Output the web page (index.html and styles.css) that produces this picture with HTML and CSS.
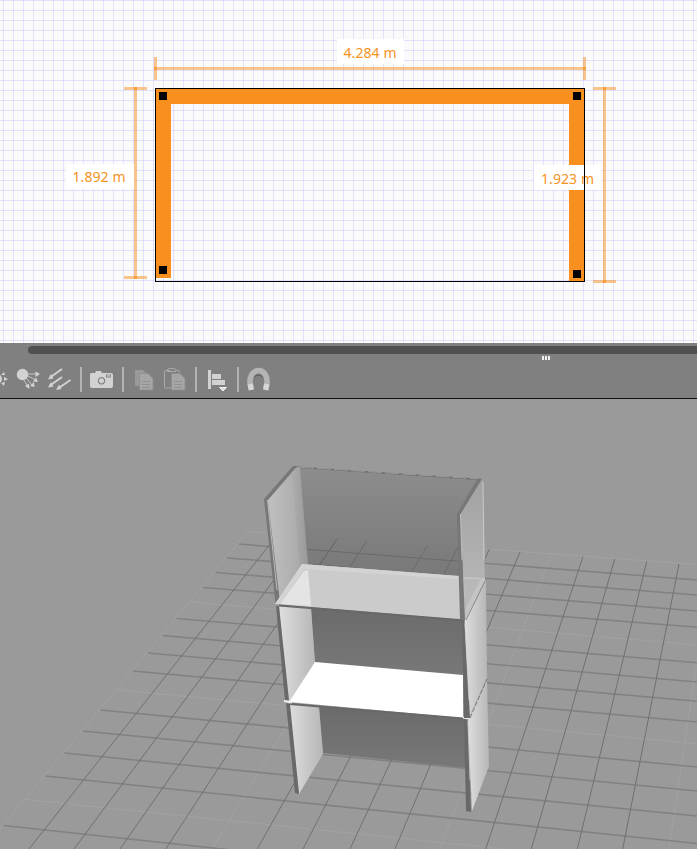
FILE: index.html
```
<!DOCTYPE html>
<html lang="en">
<head>
<meta charset="utf-8">
<title>Home planner</title>
<link rel="stylesheet" href="styles.css">
</head>
<body>
<main class="app">
  <section class="plan">
    <svg class="canvas" viewBox="0 0 697 343">
      <path class="wall" d="M155 88H585V281H569V104H171V278H155Z"/>
      <g class="dimension">
        <path d="M154 57h3v23h-3zM583 57h3v23h-3zM157 67h426v3h-426z"/>
        <path d="M124 87h23v3h-23zM124 276h23v3h-23zM134 90h3v186h-3z"/>
        <path d="M593 87h23v3h-23zM593 280h23v3h-23zM603 90h3v190h-3z"/>
      </g>
      <path class="overlap" d="M154 67h3v3h-3zM583 67h3v3h-3zM134 87h3v3h-3zM134 276h3v3h-3zM603 87h3v3h-3zM603 280h3v3h-3z"/>
      <g class="label-box">
        <rect x="337" y="39" width="67" height="25"/>
        <rect x="66" y="164" width="68" height="25"/>
        <rect x="534" y="165" width="67" height="25"/>
      </g>
      <g class="label">
        <text x="343.500" y="58" textLength="53">4.284 m</text>
        <text x="72.500" y="182" textLength="53">1.892 m</text>
        <text x="541" y="184" textLength="53">1.923 m</text>
      </g>
      <rect class="outline" x="155.500" y="88.500" width="429" height="193"/>
      <path class="handle" d="M159 92h8v8h-8zM573 92h8v8h-8zM159 266h8v8h-8zM573 270h8v8h-8z"/>
    </svg>
  </section>
  <div class="scroll"><div class="thumb"></div></div>
  <nav class="toolbar">
    <svg class="canvas" viewBox="0 357 697 41">
      <path class="grip" d="M542 356h2v4h-2zM545 356h2v4h-2zM548 356h2v4h-2z"/>
      <g class="icon">
        <circle cx="-3" cy="379" r="5"/>
        <path d="M1 375l3-3 1 3zM4 377l4 2-4 2zM1 383l4-1-1 4z"/>
        <circle cx="22.500" cy="374.500" r="5.700"/>
        <path class="ray" d="M28 374h9M28 376l8 4M26 378l6 7M24 380l4 7"/>
        <path d="M35.500 371.500l4.500 2.500-4.500 3zM33 381.500l3-4 2 4.500zM30 386l4-4 .5 5zM25 386l4-2.500.5 5.500z"/>
        <path class="arrow" d="M62 369L50 377.500M62 377L50 385.500M70.500 380L58 388.500"/>
        <path d="M48 379.500l3-5.500 2.500 4.500zM48 387.500l3-5.500 2.500 4.500zM56 390l3-5.500 2.500 4.500z"/>
        <path fill-rule="evenodd" d="M91 373h4l1-2h5l1 2h9q2 0 2 2v11q0 2-2 2H92q-2 0-2-2V375q0-2 1-2zM106 374.500v3h5v-3zM107 375.300h3.300v1.300h-3.300zM101.500 377a3.800 3.800 0 1 0 .01 0zM101.500 378.200a2.600 2.600 0 1 1-.01 0z"/>
      </g>
      <path class="divider" d="M81 367v25M123 367v25M196 367v25M238 367v25"/>
      <g class="icon muted">
        <path d="M135 370h8l5 5v11h-13z"/>
        <path class="sheet" d="M139.500 373.500h8.500l5 5v11.500h-13.500z"/>
        <path class="clip" d="M170 370.500h-4q-1.500 0-1.500 1.500v14.500q0 1.500 1.500 1.500h5M176 370.500h2.500q1 0 1 2M167.500 369.500q0-1 2-1h4q2 0 2 1v2h-8z"/>
        <path class="sheet" d="M171.500 373.500h8.500l5 5v11.500h-13.500z"/>
      </g>
      <path class="paper" d="M142 381.500h8M142 384.500h8M142 387.500h8M174 381.500h8M174 384.500h8M174 387.500h8"/>
      <path class="icon" d="M208 370h3v19h-3zM212 374h9v5h-9zM212 380h13v5h-13z"/>
      <path class="menu" d="M219.500 387.500h7l-3.500 3.500z"/>
      <path class="magnet" d="M250.300 385.500c-3.500-20 20-20 16.400 0"/>
      <path class="magnet tip" d="M250.300 384l1 6M266.700 384l-1 6"/>
      <path class="inner" d="M254.500 377q4-4 8 0"/>
    </svg>
  </nav>
  <section class="scene">
    <svg class="canvas" viewBox="0 399 697 450">
      <defs>
        <linearGradient id="back" x2="0" y2="1"><stop stop-color="#8d8d8d"/><stop offset="1" stop-color="#787878"/></linearGradient>
        <linearGradient id="lower" x2="0" y2="1"><stop stop-color="#6b6b6b"/><stop offset="1" stop-color="#787878"/></linearGradient>
        <linearGradient id="left"><stop stop-color="#c0c0c0"/><stop offset=".65" stop-color="#adadad"/><stop offset="1" stop-color="#999"/></linearGradient>
        <linearGradient id="side"><stop stop-color="#dedede"/><stop offset="1" stop-color="#b6b6b6"/></linearGradient>
        <linearGradient id="right" x2="0" y2="1"><stop stop-color="#a2a2a2"/><stop offset="1" stop-color="#bcbcbc"/></linearGradient>
      </defs>
      <g class="grid light">
        <path d="M248 531.500L697 564.500M190 602L697 645M117 690L697 743.700M25 799.500L697 869M248 531.500L0 829"/>
        <path d="M397.700 543L212 849M551.300 554L440 849M711 566L669 849"/>
      </g>
      <g class="grid rows">
        <path d="M238.500 544L697 580M227 558L697 595M215.500 572.500L697 611M203 587.500L697 627.300M176.500 618.500L697 662.700M162.500 635.500L697 682M148 653L697 701.300M133 671L697 722M100.500 710L697 767M83 731L697 791M64.500 753L697 816M45.500 776L697 843.500M3.500 825.500L697 900"/>
      </g>
      <g class="grid columns">
        <path d="M278 534L29 849M306.700 536L74 849M337.300 538.300L120 849M366.700 541L165.700 849M427.700 545L257.300 849M458 547L303 849M489.300 549.300L350 849M520 552L395 849M583 556.700L485.700 849M614.700 559L531.300 849M646.700 561.500L577.300 849M679 564L622.700 849"/>
      </g>
      <path fill="url(#back)" d="M298 467L481 479 485 580 308 566Z"/>
      <g class="grid behind">
        <path d="M303 549L484 563.300M306 564L352 567.500M334 543.500L318 566.500M337.300 538.300L319 566.500M366.700 541L349 568M427.700 545L411 573M458 547L443 576"/>
      </g>
      <path class="rim" d="M294 467L481 479.500"/>
      <path class="shine" d="M300 467.200L478 479"/>
      <path fill="url(#lower)" d="M311 607L463 620V676L315 663Z"/>
      <path fill="url(#lower)" d="M319 707L465 719 467 768 323 753Z"/>
      <path fill="url(#left)" opacity=".92" d="M267 500L297 467 300 467 308 565 302 565 277 604Z"/>
      <path fill="#fff" opacity=".06" d="M267 500L292 476 300 565 277 604Z"/>
      <path class="edge soft" d="M264 499L293 466H297L268 500 279.500 598 275.500 604Z"/>
      <path fill="url(#side)" d="M279 606L311 608 315 663 290 701 287 700Z"/>
      <path fill="url(#side)" d="M289 704L319 707 323 754 299 794Z"/>
      <path class="edge" d="M276 606H279L289 700H285ZM286 703L290 704 299 794 295 793Z"/>
      <path fill="#cbcbcb" d="M275 604L302 564 485 578V582L465 620Z"/>
      <path fill="#e4e4e4" d="M280 604L304 571 308 570 311 606Z"/>
      <path fill="#d3d3d3" d="M275 604L302 564 485 578V581L304 569 280 604Z"/>
      <path class="under" d="M279 605.500L465 620.500"/>
      <path fill="#fff" d="M315 662L463 675V718L289 702Z"/>
      <path class="under" d="M290 704L469 719"/>
      <path class="lip" d="M284 701L292 702.500M463 717.500L469 718.500"/>
      <path fill="url(#right)" d="M460 514L481 479 483 480 485 581 465 620Z"/>
      <path fill="#c4c4c4" d="M463 577L485 578V581L466 619Z"/>
      <path fill="#b8b8b8" d="M464 579H481L465 609Z"/>
      <path class="edge soft" d="M457 514L477 479.500 482 479 460.500 514 465 620 460 620Z"/>
      <path fill="url(#side)" d="M464 622L486 580 487 678 469 717Z"/>
      <path fill="url(#side)" d="M468 720L487 679 489 766 472 811Z"/>
      <path class="edge" d="M462 621H464.500L470 718H464ZM464 720H467.500L471 812 466 811Z"/>
      <path class="joint" d="M466 620L485 581"/>
      <path class="joint dashed" d="M470 718L487 679"/>
      <path class="lip thin" d="M267.500 500L277 590M460.500 514L462 560M465 624L469 700M468 721L470 780M483 482L484 560"/>
    </svg>
  </section>
</main>
</body>
</html>
```
FILE: styles.css
```
body { margin: 0; background: #9a9a9a; }
.app { display: grid; grid-template-rows: 343px 14px 41px 451px; width: 697px; height: 849px; overflow: hidden; }
.canvas { display: block; width: 100%; height: 100%; overflow: visible; }
.plan {
  background-color: #fafafa;
  background-image: linear-gradient(to right, rgba(200, 200, 255, .5) 1px, transparent 1px), linear-gradient(rgba(200, 200, 255, .5) 1px, transparent 1px);
  background-size: 10px 10px;
  background-position: 3px 0;
}
.wall { fill: #f88f1e; }
.dimension { fill: #f88f1e; fill-opacity: .5; }
.overlap { fill: #f88f1e; fill-opacity: .72; }
.label-box { fill: #fff; }
.label { fill: #f6921e; font: 14px "Noto Sans", "Open Sans", sans-serif; }
.outline { fill: none; stroke: #000; }
.scroll { box-sizing: border-box; padding: 3px 0 3px 28px; background: #808080; }
.thumb { height: 8px; border-radius: 4px 0 0 4px; background: #505050; }
.toolbar { background: #808080; }
.grip { fill: #f0f0f0; }
.icon { fill: #d2d2d2; }
.muted { fill: #9a9a9a; }
.ray { stroke: #c4c4c4; fill: none; }
.arrow { stroke: #d2d2d2; stroke-width: 2; fill: none; }
.divider { stroke: #c4c4c4; stroke-width: 1.5; }
.sheet { fill: #a6a6a6; stroke: #8c8c8c; stroke-width: .7; }
.clip { fill: none; stroke: #aaa; }
.paper { stroke: #929292; }
.menu { fill: #ddd; stroke: #f0f0f0; }
.magnet { fill: none; stroke: #b4b4b4; stroke-width: 5.5; }
.tip { stroke: #d6d6d6; }
.inner { fill: none; stroke: #555; }
.scene { box-sizing: border-box; height: 451px; border-top: 1px solid #111; background: #9a9a9a; overflow: hidden; }
.grid { fill: none; }
.light { stroke: #a2a2a2; }
.rows { stroke: #828282; stroke-width: 1.6; }
.columns { stroke: #707070; stroke-width: 1; }
.behind { stroke: #686868; stroke-width: .9; }
.edge { fill: #696969; }
.soft { fill: #777; }
.rim { fill: none; stroke: #6c6c6c; stroke-width: 1.6; }
.shine { fill: none; stroke: #b8b8b8; stroke-width: .6; stroke-dasharray: 14 3; }
.under { fill: none; stroke: #686868; stroke-width: 2; }
.lip { fill: none; stroke: #eee; stroke-width: 2; }
.thin { stroke: #d8d8d8; stroke-width: .7; }
.joint { fill: none; stroke: #888; }
.dashed { stroke: #777; stroke-dasharray: 5 1.5; }
```
